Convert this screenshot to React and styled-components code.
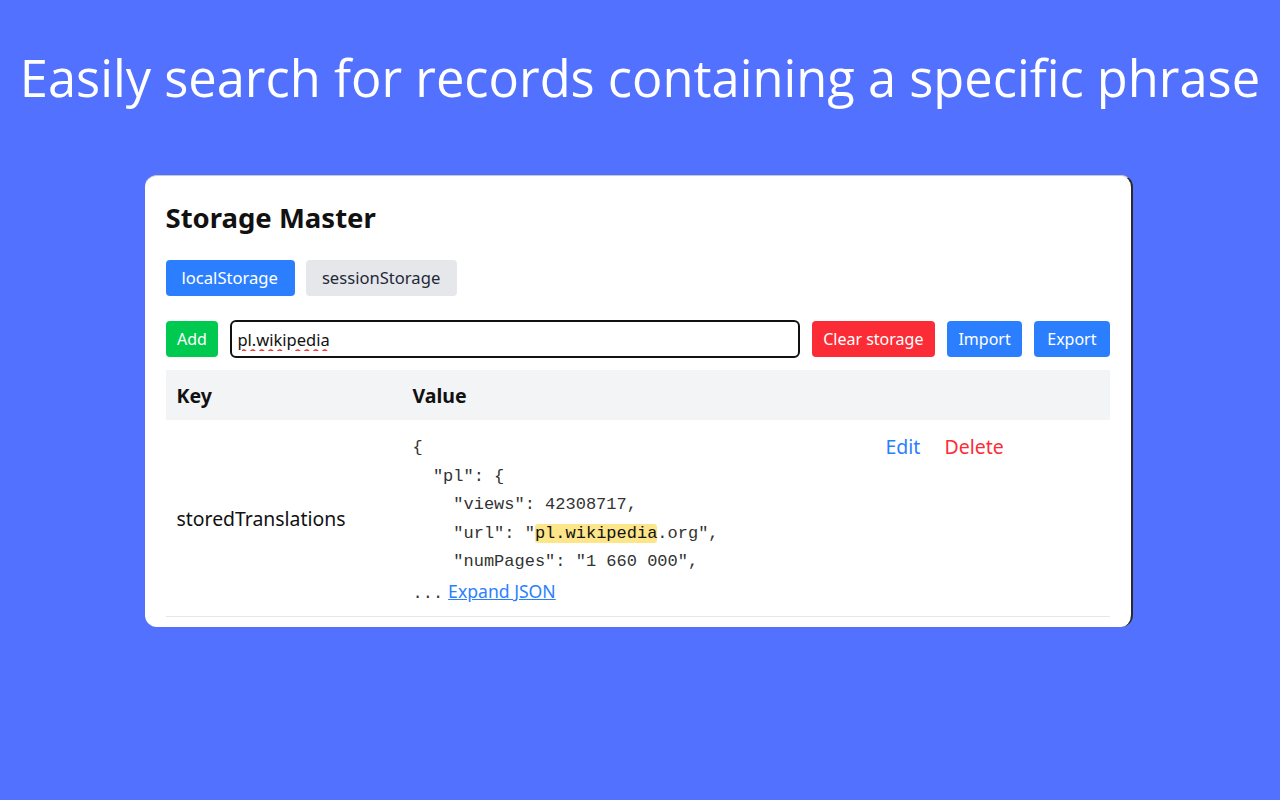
import React from 'react';
import styled, {createGlobalStyle} from "styled-components";

const GlobalStyle = createGlobalStyle`
  html, body {
    margin: 0;
    padding: 0;
    background: #5271ff;
  }
  body {
    font-family: "Noto Sans", "Open Sans", sans-serif;
  }
`;

const jsonLines = [
    {indent: 0, text: '{'},
    {indent: 1, text: '"pl": {'},
    {indent: 2, text: '"views": 42308717,'},
    {indent: 2, parts: ['"url": "', 'pl.wikipedia', '.org",']},
    {indent: 2, text: '"numPages": "1 660 000",'},
];

function App() {
    return (
        <Page>
            <GlobalStyle/>
            <Headline>Easily search for records containing a specific phrase</Headline>
            <Card>
                <Title>Storage Master</Title>
                <Tabs>
                    <Tab active>localStorage</Tab>
                    <Tab>sessionStorage</Tab>
                </Tabs>
                <Toolbar>
                    <Button color="#00c950">Add</Button>
                    <Search defaultValue="pl.wikipedia" spellCheck={false}/>
                    <Button color="#fb2c36">Clear storage</Button>
                    <Button color="#2b7fff">Import</Button>
                    <Button color="#2b7fff" wide>Export</Button>
                </Toolbar>
                <Table>
                    <colgroup>
                        <col style={{width: 236}}/>
                        <col/>
                        <col style={{width: 235}}/>
                    </colgroup>
                    <thead>
                    <tr>
                        <Th>Key</Th>
                        <Th>Value</Th>
                        <Th/>
                    </tr>
                    </thead>
                    <tbody>
                    <tr>
                        <KeyCell>storedTranslations</KeyCell>
                        <ValueCell>
                            {jsonLines.map((line, i) => (
                                <Line key={i} indent={line.indent}>
                                    {line.parts ? (
                                        <>
                                            {line.parts[0]}
                                            <Mark>{line.parts[1]}</Mark>
                                            {line.parts[2]}
                                        </>
                                    ) : line.text}
                                </Line>
                            ))}
                            <Line indent={0}>
                                ...<Expand href="#">Expand JSON</Expand>
                            </Line>
                        </ValueCell>
                        <ActionCell>
                            <Action color="#2b7fff">Edit</Action>
                            <Action color="#fb2c36">Delete</Action>
                        </ActionCell>
                    </tr>
                    </tbody>
                </Table>
            </Card>
        </Page>
    )
}

const Page = styled.div`
  width: 1280px;
  height: 800px;
  display: flex;
  flex-direction: column;
  align-items: center;
  overflow: hidden;
`;

const Headline = styled.h1`
  margin: 48px 0 0;
  font-family: "Open Sans", sans-serif;
  font-weight: 400;
  font-size: 50.6px;
  line-height: 60px;
  color: #fff;
  white-space: nowrap;
`;

const Card = styled.div`
  box-sizing: border-box;
  width: 988px;
  margin-top: 67px;
  margin-left: -3px;
  padding: 20px 21px 10px;
  background: #fff;
  border-radius: 12px;
  border-top: 1px solid #c9c9c9;
  border-right: 2px solid #2a2a2a;
`;

const Title = styled.h2`
  margin: 6px 0 0;
  font-size: 27.5px;
  line-height: 32px;
  font-weight: 700;
  color: #111;
`;

const Tabs = styled.div`
  display: flex;
  gap: 11px;
  margin-top: 26px;
`;

const Tab = styled.button`
  height: 36px;
  padding: 0 17px 0 16px;
  border: none;
  border-radius: 4px;
  font-family: inherit;
  font-size: 16.6px;
  line-height: 34px;
  background: ${p => p.active ? '#2b7fff' : '#e5e7eb'};
  color: ${p => p.active ? '#fff' : '#1f2937'};
`;

const Toolbar = styled.div`
  display: flex;
  align-items: center;
  gap: 12px;
  margin-top: 24px;
`;

const Button = styled.button`
  height: 36px;
  padding: 0 ${p => p.wide ? 13 : 11.5}px;
  border: none;
  border-radius: 4px;
  font-family: inherit;
  font-size: 16px;
  white-space: nowrap;
  background: ${p => p.color};
  color: #fff;
`;

const Search = styled.input`
  flex: 1;
  box-sizing: border-box;
  height: 38px;
  padding: 0 5px;
  border: 2px solid #111;
  border-radius: 6px;
  font-family: inherit;
  font-size: 16.5px;
  color: #111;
  outline: none;
  text-decoration: underline wavy #e33;
  text-underline-offset: 3px;
`;

const Table = styled.table`
  width: 100%;
  margin-top: 12px;
  border-collapse: collapse;
  table-layout: fixed;
`;

const Th = styled.th`
  height: 50px;
  padding: 0 11px;
  text-align: left;
  font-size: 19.5px;
  font-weight: 700;
  color: #111;
  background: #f3f4f6;
`;

const KeyCell = styled.td`
  padding: 0 11px;
  font-size: 19.4px;
  color: #111;
  vertical-align: middle;
  border-bottom: 1px solid #e5e7eb;
`;

const ValueCell = styled.td`
  padding: 14px 11px 8px;
  border-bottom: 1px solid #e5e7eb;
  vertical-align: top;
`;

const Line = styled.div`
  padding-left: ${p => p.indent * 2}ch;
  font-family: "Liberation Mono", monospace;
  font-size: 17px;
  line-height: 28.5px;
  color: #333;
  white-space: pre;
`;

const Mark = styled.span`
  background: #fde68a;
  border-radius: 3px;
  color: #111;
`;

const Expand = styled.a`
  margin-left: 5px;
  font-family: "Noto Sans", sans-serif;
  font-size: 17.6px;
  color: #2b7fff;
  text-decoration: underline;
`;

const ActionCell = styled.td`
  padding: 13px 11px 0;
  vertical-align: top;
  border-bottom: 1px solid #e5e7eb;
  white-space: nowrap;
`;

const Action = styled.span`
  display: inline-block;
  margin-right: 24px;
  font-size: 19.5px;
  line-height: 28px;
  color: ${p => p.color};
`;

export default App;
